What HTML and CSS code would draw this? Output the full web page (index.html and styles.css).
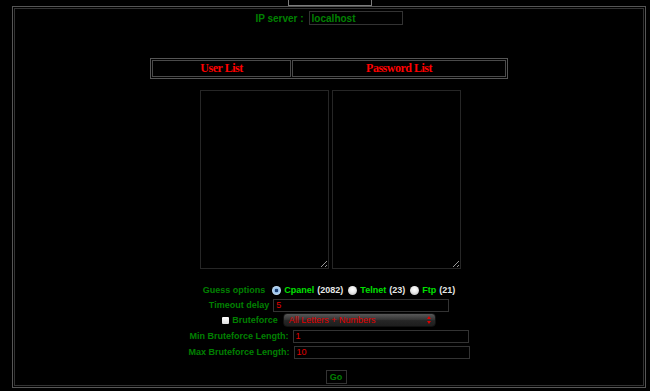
FILE: index.html
```html
<!DOCTYPE html>
<html lang="en">
<head>
	<meta charset="UTF-8">
	<title>Cpanel Bruteforce</title>
	<link rel="stylesheet" href="styles.css">
</head>
<body>
	<div class="tabbar">
		<div class="tab"></div>
	</div>
	<div class="frame">
		<form class="panel">
			<!-- target -->
			<div class="ip-row">
				<label class="ip-label" for="txtIp">IP server :</label>
				<input type="text" id="txtIp" class="field ip" value="localhost">
			</div>

			<!-- word lists -->
			<table class="list-head">
				<tr>
					<th class="user-col">User List</th>
					<th>Password List</th>
				</tr>
			</table>
			<div class="lists">
				<textarea id="txtUsers"></textarea>
				<textarea id="txtPasswords"></textarea>
			</div>

			<!-- options -->
			<div class="row guess">
				<span class="lbl">Guess options</span>
				<input type="radio" name="proto" class="radio first" checked>
				<span class="proto">Cpanel</span><span class="port">(2082)</span>
				<input type="radio" name="proto" class="radio">
				<span class="proto">Telnet</span><span class="port">(23)</span>
				<input type="radio" name="proto" class="radio">
				<span class="proto">Ftp</span><span class="port">(21)</span>
			</div>
			<div class="row timeout">
				<label class="lbl" for="txtTimeout">Timeout delay</label>
				<input type="text" id="txtTimeout" class="field" value="5">
			</div>
			<div class="row brute">
				<input type="checkbox" id="chkBrute" class="check">
				<label class="lbl" for="chkBrute">Bruteforce</label>
				<span class="select-wrap">
					<select id="charset">
						<option>All Letters + Numbers</option>
						<option>Letters</option>
						<option>Numbers</option>
					</select>
					<svg class="arrows" width="4" height="8" viewBox="0 0 4 8">
						<path d="M0 3 L2 0 L4 3 Z M0 5 L2 8 L4 5 Z" fill="#e00000"/>
					</svg>
				</span>
			</div>
			<div class="row min">
				<label class="lbl" for="txtMin">Min Bruteforce Length:</label>
				<input type="text" id="txtMin" class="field" value="1">
			</div>
			<div class="row max">
				<label class="lbl" for="txtMax">Max Bruteforce Length:</label>
				<input type="text" id="txtMax" class="field" value="10">
			</div>
			<input type="button" class="go" value="Go">
		</form>
	</div>
</body>
</html>
```

FILE: styles.css
```css
body{
	margin: 0;
	background-color: #000;
	font-family: "Liberation Sans", Arial, sans-serif;
	font-size: 9px;
	color: #008000;
}
.tabbar{
	height: 6px;
	padding-left: 288px;
}
.tab{
	width: 84px;
	height: 6px;
	box-sizing: border-box;
	border: 1px solid #7c7c7c;
	border-top: none;
}
.frame{
	margin-left: 12px;
	width: 634px;
	height: 382px;
	box-sizing: border-box;
	border: 1px solid #565656;
	padding: 1px;
}
.panel{
	height: 100%;
	margin: 0;
	box-sizing: border-box;
	border: 1px solid #333;
	display: flex;
	flex-direction: column;
	align-items: center;
}
.ip-row{
	display: flex;
	align-items: center;
	margin-top: 2px;
	height: 14px;
}
.ip-label{
	font-size: 10px;
	font-weight: bold;
	margin-right: 5px;
}
.field{
	box-sizing: border-box;
	height: 13px;
	width: 176px;
	margin: 0;
	padding: 0 2px;
	background-color: #000;
	border: 1px solid #333;
	color: #e00000;
	font-family: "Liberation Sans", Arial, sans-serif;
	font-size: 9px;
	outline: none;
}
.ip{
	width: 94px;
	height: 14px;
	color: #008000;
	font-size: 10px;
	font-weight: bold;
}
.list-head{
	margin-top: 33px;
	width: 358px;
	height: 20px;
	border: 1px solid #555;
	border-spacing: 1px;
}
.list-head th{
	padding: 0;
	border: 1px solid #4a4a4a;
	color: #f00;
	font-family: "Liberation Serif", "Times New Roman", serif;
	font-size: 12px;
	font-weight: bold;
	letter-spacing: -0.5px;
}
.list-head .user-col{
	width: 137px;
}
.lists{
	display: flex;
	gap: 3px;
	margin-top: 11px;
	padding-left: 3px;
}
.lists textarea{
	box-sizing: border-box;
	width: 129px;
	height: 179px;
	margin: 0;
	background-color: #000;
	border: 1px solid #262626;
	color: #e00000;
	outline: none;
}
.row{
	display: flex;
	align-items: center;
	height: 14px;
}
.lbl{
	font-weight: bold;
}
.guess{
	margin-top: 14px;
}
.timeout{
	margin-top: 1px;
}
.brute{
	margin-top: 1px;
}
.min, .max{
	margin-top: 2px;
}
.timeout .field, .min .field, .max .field{
	margin-left: 4px;
}
.radio{
	appearance: none;
	width: 9px;
	height: 9px;
	margin: 0 3px 0 5px;
	border-radius: 50%;
	background: radial-gradient(circle at 50% 40%, #fff 0, #eee 40%, #b5b5b5 100%);
}
.radio.first{
	margin-left: 7px;
}
.radio:checked{
	background: radial-gradient(circle, #1d3f73 0, #1d3f73 22%, #8fbbe6 32%, #c6def5 70%, #7ea6cf 100%);
}
.proto{
	font-weight: bold;
	color: #00e000;
}
.port{
	font-weight: bold;
	color: #e6e6e6;
	margin-left: 3px;
}
.check{
	appearance: none;
	width: 7px;
	height: 7px;
	margin: 0 3px 0 0;
	border-radius: 1px;
	background: linear-gradient(#fff, #ddd);
}
.select-wrap{
	position: relative;
	display: inline-block;
	margin-left: 5px;
	height: 14px;
}
.select-wrap select{
	appearance: none;
	box-sizing: border-box;
	width: 153px;
	height: 14px;
	margin: 0;
	padding: 0 0 0 5px;
	border: 1px solid #111;
	border-radius: 4px;
	background: linear-gradient(#585858, #363636 45%, #262626 55%, #1e1e1e);
	color: #e00000;
	font-family: "Liberation Sans", Arial, sans-serif;
	font-size: 9px;
	outline: none;
}
.arrows{
	position: absolute;
	right: 5px;
	top: 3px;
}
.go{
	box-sizing: border-box;
	width: 21px;
	height: 14px;
	margin-top: 11px;
	margin-left: 14px;
	padding: 0;
	background-color: #000;
	border: 1px solid #333;
	color: #008000;
	font-family: "Liberation Sans", Arial, sans-serif;
	font-size: 9px;
	font-weight: bold;
}
```
